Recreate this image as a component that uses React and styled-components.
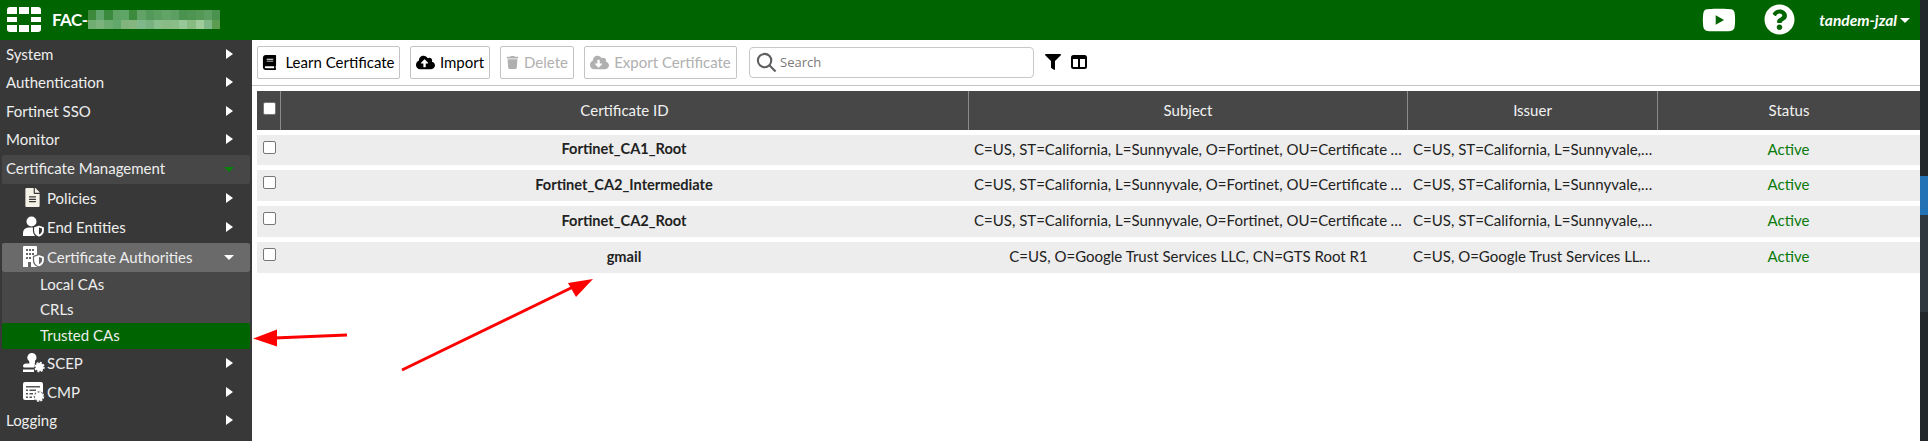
import React from 'react';
import styled, { createGlobalStyle } from 'styled-components';
import {
  FaBook,
  FaCloudUploadAlt,
  FaCloudDownloadAlt,
  FaTrash,
  FaFilter,
  FaYoutube,
  FaQuestionCircle,
  FaFileAlt,
} from 'react-icons/fa';

const mosaicTop = ['#3d8a3d', '#5ea46b', '#3a8a3d', '#5fa364', '#60a568', '#3c8a3c', '#62a266', '#53995a', '#5a9e60', '#62a367', '#5d9f62', '#4a934e', '#4e9552', '#539955', '#5b9e60', '#4a934e'];
const mosaicBottom = ['#72ad74', '#7cb27c', '#6cab70', '#62a76c', '#80b47c', '#86b680', '#7fb88a', '#77b280', '#88bf8c', '#88bb86', '#8bbd88', '#98c79a', '#88bb82', '#a0cc9c', '#80b788', '#5c9c50'];

const certs = [
  {
    id: 'Fortinet_CA1_Root',
    subject: 'C=US, ST=California, L=Sunnyvale, O=Fortinet, OU=Certificate Authority, CN=Fortinet_CA1',
    issuer: 'C=US, ST=California, L=Sunnyvale, O=Fortinet',
  },
  {
    id: 'Fortinet_CA2_Intermediate',
    subject: 'C=US, ST=California, L=Sunnyvale, O=Fortinet, OU=Certificate Authority, CN=Fortinet_CA2',
    issuer: 'C=US, ST=California, L=Sunnyvale, O=Fortinet',
  },
  {
    id: 'Fortinet_CA2_Root',
    subject: 'C=US, ST=California, L=Sunnyvale, O=Fortinet, OU=Certificate Authority, CN=Fortinet_CA2',
    issuer: 'C=US, ST=California, L=Sunnyvale, O=Fortinet',
  },
  {
    id: 'gmail',
    subject: 'C=US, O=Google Trust Services LLC, CN=GTS Root R1',
    issuer: 'C=US, O=Google Trust Services LLC, CN=GTS Root R1',
  },
];

const Logo = () => (
  <svg width="34" height="25" viewBox="0 0 34 25" fill="#fff">
    <path d="M3 0h7v7H0V3a3 3 0 0 1 3-3z" />
    <rect x="12" width="10" height="7" />
    <path d="M24 0h7a3 3 0 0 1 3 3v4H24z" />
    <rect y="10" width="10" height="5" />
    <rect x="24" y="10" width="10" height="5" />
    <path d="M0 18h10v7H3a3 3 0 0 1-3-3z" />
    <rect x="12" y="18" width="10" height="7" />
    <path d="M24 18h10v4a3 3 0 0 1-3 3h-7z" />
  </svg>
);

const ColumnsIcon = () => (
  <svg width="16" height="14" viewBox="0 0 16 14">
    <rect x="1" y="1" width="14" height="12" rx="1.5" fill="#fff" stroke="#000" strokeWidth="2" />
    <rect x="1" y="1" width="14" height="3" fill="#000" />
    <rect x="7" y="1" width="2" height="12" fill="#000" />
  </svg>
);

const UserShieldIcon = () => (
  <svg width="22" height="22" viewBox="0 0 22 22">
    <circle cx="8.5" cy="5.5" r="5" fill="#fff" />
    <path d="M0 20v-3a5.5 5.5 0 0 1 5.500-5.500h6L12 20z" fill="#fff" />
    <path d="M16 9l5.500 2v3.500c0 3.500-2.500 5.800-5.500 6.800-3-1-5.500-3.300-5.500-6.800V11z" fill="#fff" stroke="#383838" strokeWidth="1.200" />
    <path d="M16 11.500l3 1v2c0 2-1.300 3.300-3 4z" fill="#383838" />
  </svg>
);

const BuildingShieldIcon = () => (
  <svg width="22" height="22" viewBox="0 0 22 22">
    <path d="M1 0h12a1 1 0 0 1 1 1v20H0V1a1 1 0 0 1 1-1z" fill="#fff" />
    <path d="M3 3h2v2H3zM6 3h2v2H6zM9 3h2v2H9zM3 7h2v2H3zM6 7h2v2H6zM9 7h2v2H9zM3 11h2v2H3zM6 11h2v2H6zM5 16h3v5H5z" fill="#666" />
    <path d="M16 8.500l5.500 2v3.500c0 3.700-2.500 6-5.500 7-3-1-5.500-3.300-5.500-7v-3.500z" fill="#fff" stroke="#666" strokeWidth="1.200" />
    <path d="M16 11l3 1v2c0 2-1.300 3.500-3 4.200z" fill="#666" />
  </svg>
);

const StampGearIcon = () => (
  <svg width="22" height="20" viewBox="0 0 22 20">
    <path d="M9 0a4.500 4.500 0 0 1 3 7.800V10l-.5 1H13l-1.500 3.500h-10A1.500 1.500 0 0 1 0 13c0-1.500 1.500-2.500 3-2.500h3.500L6 8A4.500 4.500 0 0 1 9 0z" fill="#fff" />
    <rect y="16.500" width="11" height="2.500" fill="#fff" />
    <circle cx="16.500" cy="14" r="5.300" fill="#383838" />
    <circle cx="16.500" cy="14" r="4" fill="#fff" />
    <circle cx="16.500" cy="14" r="4.500" fill="none" stroke="#fff" strokeWidth="1.400" strokeDasharray="2 1.500" />
  </svg>
);

const ListGearIcon = () => (
  <svg width="22" height="20" viewBox="0 0 22 20">
    <path d="M2 0h16a2 2 0 0 1 2 2v16H2a2 2 0 0 1-2-2V2a2 2 0 0 1 2-2z" fill="#fff" />
    <path d="M3 4h14v1.500H3zM3 7.500h2v1.500H3zM6.500 7.500H13V9H6.500zM3 11h2v1.500H3zM6.500 11H10v1.500H6.500zM3 14.500h2V16H3zM6.500 14.500H9V16H6.500z" fill="#555" />
    <circle cx="16" cy="14.500" r="5.300" fill="#555" />
    <circle cx="16" cy="14.500" r="4" fill="#fff" />
    <circle cx="16" cy="14.500" r="4.500" fill="none" stroke="#fff" strokeWidth="1.400" strokeDasharray="2 1.500" />
  </svg>
);

const App = () => {
  return (
    <>
      <GlobalStyle />
      <Page>
        <Main>
          <Header>
            <Logo />
            <Hostname>
              FAC-
              <Mosaic>
                {[...mosaicTop, ...mosaicBottom].map((color, i) => (
                  <MosaicCell key={i} color={color} />
                ))}
              </Mosaic>
            </Hostname>
            <HeaderRight>
              <YoutubeIcon />
              <HelpIcon />
              <UserName>tandem-jzal</UserName>
              <Caret dir="down" color="#fff" />
            </HeaderRight>
          </Header>
          <Body>
            <Sidebar>
              <NavRow>System<Caret /></NavRow>
              <NavRow>Authentication<Caret /></NavRow>
              <NavRow>Fortinet SSO<Caret /></NavRow>
              <NavRow>Monitor<Caret /></NavRow>
              <NavRow bg="#474747" h={29}>Certificate Management<Caret dir="down" color="#0b800b" /></NavRow>
              <NavRow sub h={29}><NavIcon><FaFileAlt size={19} /></NavIcon>Policies<Caret /></NavRow>
              <NavRow sub h={30}><NavIcon><UserShieldIcon /></NavIcon>End Entities<Caret /></NavRow>
              <NavRow sub bg="#6a6a6a" h={29}><NavIcon><BuildingShieldIcon /></NavIcon>Certificate Authorities<Caret dir="down" /></NavRow>
              <SubMenu>
                <SubRow>Local CAs</SubRow>
                <SubRow>CRLs</SubRow>
                <SubRow active>Trusted CAs</SubRow>
              </SubMenu>
              <NavRow sub h={29}><NavIcon><StampGearIcon /></NavIcon>SCEP<Caret /></NavRow>
              <NavRow sub h={29}><NavIcon><ListGearIcon /></NavIcon>CMP<Caret /></NavRow>
              <NavRow h={29}>Logging<Caret /></NavRow>
            </Sidebar>
            <Content>
              <Toolbar>
                <ToolButton width={143} gap={8}><FaBook size={15} />Learn Certificate</ToolButton>
                <ToolButton width={80}><FaCloudUploadAlt size={19} />Import</ToolButton>
                <ToolButton width={74} disabled><FaTrash size={13} />Delete</ToolButton>
                <ToolButton width={153} disabled><FaCloudDownloadAlt size={19} />Export Certificate</ToolButton>
                <SearchBox>
                  <SearchIcon viewBox="0 0 22 22">
                    <circle cx="9" cy="9" r="7" />
                    <path d="M14 14l6.500 6.500" />
                  </SearchIcon>
                  <SearchInput placeholder="Search" />
                </SearchBox>
                <FilterIcon size={16} />
                <ColumnsIcon />
              </Toolbar>
              <HeaderRow>
                <CheckCell head><Check /></CheckCell>
                <HeadCell>Certificate ID</HeadCell>
                <HeadCell>Subject</HeadCell>
                <HeadCell>Issuer</HeadCell>
                <HeadCell>Status</HeadCell>
              </HeaderRow>
              {certs.map((cert, i) => (
                <DataRow key={cert.id} tall={i > 0}>
                  <CheckCell><Check /></CheckCell>
                  <IdCell>{cert.id}</IdCell>
                  <TextCell>{cert.subject}</TextCell>
                  <TextCell>{cert.issuer}</TextCell>
                  <StatusCell>Active</StatusCell>
                </DataRow>
              ))}
            </Content>
          </Body>
        </Main>
        <Strip>
          <StripPart h={176} color="#22272b" />
          <StripPart h={39} color="#2272b5" />
          <StripPart h={97} color="#2f383e" />
          <StripPart h={129} color="#22272b" />
        </Strip>
        <Arrows width="1928" height="441" viewBox="0 0 1928 441">
          <path d="M347 335L274 338" stroke="#fe0000" strokeWidth="3" />
          <path d="M253 338.500l24-9v17z" fill="#fe0000" />
          <path d="M402 370L573 287" stroke="#fe0000" strokeWidth="3" />
          <path d="M593 279l-25 4 8 14z" fill="#fe0000" />
        </Arrows>
      </Page>
    </>
  );
};

const GlobalStyle = createGlobalStyle`
  html, body {
    margin: 0;
    padding: 0;
    background: #fff;
  }
  * {
    box-sizing: border-box;
  }
  body {
    font-family: Lato, "Liberation Sans", sans-serif;
    font-size: 15px;
  }
`;

const Page = styled.div`
  position: relative;
  display: flex;
  width: 1928px;
  height: 441px;
  overflow: hidden;
`;

const Main = styled.div`
  display: flex;
  flex-direction: column;
  width: 1920px;
`;

const Header = styled.div`
  display: flex;
  align-items: center;
  flex: none;
  height: 40px;
  padding: 0 10px 1px 7px;
  background: #006400;
  color: #fff;
`;

const Hostname = styled.div`
  display: flex;
  align-items: center;
  margin-left: 11px;
  font-size: 17px;
  font-weight: 700;
  letter-spacing: -0.5px;
`;

const Mosaic = styled.div`
  display: grid;
  grid-template-columns: repeat(16, 8.3px);
  grid-template-rows: 10px 9px;
`;

const MosaicCell = styled.span`
  background: ${props => props.color};
`;

const HeaderRight = styled.div`
  display: flex;
  align-items: center;
  margin-left: auto;
`;

const YoutubeIcon = styled(FaYoutube)`
  width: 34px;
  height: 36px;
  color: #fff;
`;

const HelpIcon = styled(FaQuestionCircle)`
  width: 31px;
  height: 31px;
  margin-left: 28px;
  color: #fff;
`;

const UserName = styled.span`
  margin-left: 24px;
  margin-right: 3px;
  font-size: 15.5px;
  font-weight: 700;
  font-style: italic;
`;

const Caret = styled.span`
  flex: none;
  width: 0;
  height: 0;
  margin-left: auto;
  ${props =>
    props.dir === 'down'
      ? `
    border-left: 5px solid transparent;
    border-right: 5px solid transparent;
    border-top: 5px solid ${props.color || '#fff'};
    margin-top: 2px;
  `
      : `
    border-top: 5px solid transparent;
    border-bottom: 5px solid transparent;
    border-left: 7px solid ${props.color || '#fff'};
    margin-right: 1px;
  `}
`;

const Body = styled.div`
  display: flex;
  flex: 1;
  min-height: 0;
`;

const Sidebar = styled.div`
  flex: none;
  width: 252px;
  padding: 1px 2px 0;
  background: #383838;
  color: #eee;
`;

const NavRow = styled.div`
  display: flex;
  align-items: center;
  height: ${props => props.h || 28.5}px;
  padding: 0 16px ${props => (props.sub ? '2px' : '3px')} ${props => (props.sub ? '21px' : '4px')};
  border-radius: 2px;
  background: ${props => props.bg || 'transparent'};
`;

const NavIcon = styled.span`
  display: flex;
  align-items: center;
  width: 24px;
  flex: none;
  color: #f4f1e6;
`;

const SubMenu = styled.div`
  background: #474747;
  border-radius: 0 0 2px 2px;
`;

const SubRow = styled.div`
  display: flex;
  align-items: center;
  height: ${props => (props.active ? '26px' : '25.5px')};
  padding: 0 0 2px 38px;
  border-radius: 2px;
  background: ${props => (props.active ? '#006400' : 'transparent')};
`;

const Content = styled.div`
  flex: 1;
  min-width: 0;
  padding-left: 5px;
  background: #fff;
`;

const Toolbar = styled.div`
  display: flex;
  align-items: center;
  gap: 10px;
  height: 46px;
  margin-left: -5px;
  padding: 0 0 1px 5px;
  border-bottom: 1px solid #c4c4c4;
  margin-bottom: 5px;
`;

const ToolButton = styled.button`
  display: flex;
  flex: none;
  align-items: center;
  justify-content: center;
  gap: ${props => props.gap || 5}px;
  width: ${props => props.width}px;
  height: 33px;
  padding: 0;
  border: 1px solid #c4c4c4;
  border-radius: 2px;
  background: #fff;
  color: ${props => (props.disabled ? '#b0b0b0' : '#000')};
  font-family: inherit;
  font-size: 15px;
`;

const SearchBox = styled.div`
  display: flex;
  align-items: center;
  flex: none;
  width: 285px;
  height: 31px;
  margin-left: 2px;
  padding-left: 6px;
  border: 1px solid #c8c8c8;
  border-radius: 4px;
`;

const SearchIcon = styled.svg`
  width: 21px;
  height: 21px;
  fill: none;
  stroke: #5f5f5f;
  stroke-width: 2.2;
`;

const SearchInput = styled.input`
  flex: 1;
  min-width: 0;
  margin-left: 1px;
  border: none;
  outline: none;
  background: transparent;
  font-family: "Open Sans", sans-serif;
  font-size: 13px;

  &::placeholder {
    color: #7a7a7a;
  }
`;

const FilterIcon = styled(FaFilter)`
  margin-left: 1px;
  color: #000;
`;

const columns = '23px 688px 439px 250px 1fr';

const HeaderRow = styled.div`
  display: grid;
  grid-template-columns: ${columns};
  height: 39px;
  margin-bottom: 5px;
  background: #474747;
  color: #f2f2f2;
`;

const CheckCell = styled.div`
  padding: ${props => (props.head ? '11px' : '0')} 0 ${props => (props.head ? '0' : '3px')} 6px;
`;

const Check = styled.span`
  display: block;
  width: 13px;
  height: 13px;
  border: 1px solid #777;
  border-radius: 2px;
  background: #fff;
`;

const HeadCell = styled.div`
  display: flex;
  align-items: center;
  justify-content: center;
  padding-bottom: 2px;
  border-left: 1px solid #8a8a8a;
`;

const DataRow = styled.div`
  display: grid;
  grid-template-columns: ${columns};
  align-items: center;
  height: ${props => (props.tall ? '31px' : '30px')};
  margin-bottom: 5px;
  padding-bottom: 3px;
  background: #ededed;
  color: #222;
`;

const IdCell = styled.div`
  font-size: 14.6px;
  font-weight: 700;
  text-align: center;
`;

const TextCell = styled.div`
  padding: 0 4px 0 6px;
  overflow: hidden;
  white-space: nowrap;
  text-overflow: ellipsis;
  text-align: center;
`;

const StatusCell = styled.div`
  color: #0a7a0a;
  text-align: center;
`;

const Strip = styled.div`
  display: flex;
  flex-direction: column;
  flex: none;
  width: 8px;
`;

const StripPart = styled.div`
  flex: none;
  height: ${props => props.h}px;
  background: ${props => props.color};
`;

const Arrows = styled.svg`
  position: absolute;
  top: 0;
  left: 0;
  pointer-events: none;
`;

export default App;
